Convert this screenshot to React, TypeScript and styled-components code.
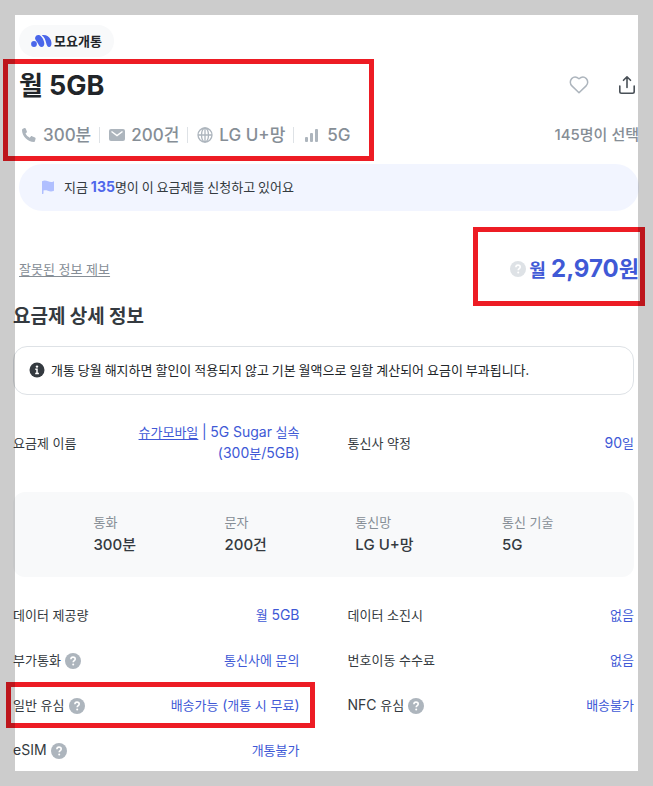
import React from "react";
import styled, { createGlobalStyle, css } from "styled-components";

const hangulFirst = `"Noto Sans CJK KR", Inter, sans-serif`;
const latinFirst = `Inter, "Noto Sans CJK KR", sans-serif`;

const GlobalStyle = createGlobalStyle`
  *, *::before, *::after { box-sizing: border-box; }
  body {
    margin: 0;
    background: #fff;
    color: #343a40;
    font-family: ${latinFirst};
    font-size: 13px;
    line-height: 21px;
  }
  h1, h2, p, dl, dd, dt, ul { margin: 0; padding: 0; }
  button { font: inherit; border: 0; background: none; padding: 0; cursor: pointer; }
`;

const Page = styled.main`
  position: relative;
  min-height: 100vh;
  padding: 25px 0;
  overflow: hidden;
`;

const Frame = styled.div`
  position: absolute;
  inset: 0;
  z-index: 2;
  border: 15px solid rgba(0, 0, 0, 0.2);
  pointer-events: none;
`;

const Highlight = styled.div<{ $inset: string }>`
  position: absolute;
  inset: ${(p) => p.$inset};
  z-index: 1;
  border: 5px solid #ed1c24;
  pointer-events: none;
`;

const LatinRun = styled.span<{ $size: number }>`
  font-family: ${latinFirst};
  font-size: ${(p) => p.$size}px;
  line-height: 1;
`;

/* Sets the Latin letters and digits of a mixed string a little larger than its Hangul. */
const Mixed = ({ text, latin }: { text: string; latin: number }) => (
  <span>
    {text
      .split(/([\x21-\x7e]+)/)
      .filter(Boolean)
      .map((part, i) =>
        /^[\x21-\x7e]/.test(part) ? (
          <LatinRun key={i} $size={latin}>
            {part}
          </LatinRun>
        ) : (
          part
        ),
      )}
  </span>
);

const Header = styled.header`
  padding: 0 14px 0 19px;
`;

const Badge = styled.div`
  display: inline-flex;
  align-items: center;
  gap: 2px;
  height: 32px;
  padding: 0 12px;
  border-radius: 16px;
  background: #f8f9fa;
  color: #212529;
  font-weight: 600;
  vertical-align: top;
`;

const TitleBlock = styled.div`
  display: flex;
  justify-content: space-between;
  margin-top: 10px;
`;

const Summary = styled.div`
  position: relative;
`;

const Title = styled.h1`
  height: 36px;
  color: #212529;
  font-size: 26px;
  font-weight: 700;
  line-height: 38px;
`;

const Specs = styled.ul`
  display: flex;
  align-items: center;
  height: 24px;
  margin-top: 20px;
  color: #868e96;
  font-size: 17px;
  font-weight: 500;
  line-height: 24px;
  list-style: none;
`;

const Spec = styled.li`
  display: flex;
  align-items: center;
  gap: 6px;
  white-space: nowrap;

  & + &::before {
    content: "";
    width: 1px;
    height: 16px;
    margin: 0 3px 0 8px;
    background: #dee2e6;
  }
`;

const Side = styled.div`
  display: flex;
  flex-direction: column;
  align-items: flex-end;
  white-space: nowrap;
`;

const Actions = styled.div`
  display: flex;
  align-items: center;
  gap: 24px;
  height: 36px;
`;

const IconButton = styled.button`
  display: flex;
  width: 24px;
  height: 24px;
`;

const Picks = styled.p`
  height: 24px;
  margin-top: 20px;
  color: #868e96;
  font-size: 15px;
  font-weight: 500;
  line-height: 24px;
`;

const Banner = styled.p`
  display: flex;
  align-items: center;
  gap: 8px;
  height: 47px;
  margin-top: 17px;
  padding: 0 21px 2px;
  border-radius: 24px;
  background: #f2f5ff;
  font-family: ${hangulFirst};

  strong {
    color: #4f67eb;
    font-family: ${latinFirst};
    font-size: 14px;
    font-weight: 700;
    line-height: 1;
  }
`;

const PriceRow = styled.div`
  display: flex;
  align-items: center;
  justify-content: space-between;
  height: 32px;
  margin-top: 42px;
`;

const ReportLink = styled.a`
  color: #868e96;
  text-underline-offset: 2px;
`;

const Price = styled.p`
  position: relative;
  display: flex;
  align-items: center;
  gap: 3px;
  height: 32px;
  color: #4059d6;
  font-size: 22px;
  font-weight: 700;
  line-height: 32px;
  white-space: nowrap;

  small {
    font-size: 18px;
    line-height: 1;
  }
`;

const Details = styled.section`
  padding: 0 19px 0 13px;
`;

const Heading = styled.h2`
  margin-top: 16px;
  font-family: ${hangulFirst};
  font-size: 19px;
  font-weight: 600;
  line-height: 28px;
`;

const Notice = styled.p`
  display: flex;
  align-items: center;
  gap: 6px;
  margin-top: 17px;
  padding: 12px 15px 14px;
  border: 1px solid #dee2e6;
  border-radius: 14px;
  color: #212529;
  font-family: ${hangulFirst};
`;

const Rows = styled.dl<{ $top: number }>`
  display: grid;
  grid-template-columns: 1fr 1fr;
  gap: 24px 48px;
  margin-top: ${(p) => p.$top}px;
`;

const Row = styled.div`
  position: relative;
  display: flex;
  align-items: center;
  justify-content: space-between;
  gap: 16px;
  min-height: 21px;

  dt {
    display: flex;
    align-items: center;
    gap: 4px;
    white-space: nowrap;
  }
  dd {
    color: #4059d6;
    text-align: right;
  }
  a { color: inherit; text-underline-offset: 2px; }
`;

const Stats = styled.dl`
  display: flex;
  justify-content: space-evenly;
  gap: 8px;
  margin-top: 28px;
  padding: 20px 0;
  border-radius: 12px;
  background: #f8f9fa;

  dt { color: #868e96; line-height: 20px; }
  dd { height: 25px; font-size: 15px; font-weight: 500; line-height: 25px; }
`;

const HelpButton = styled.button<{ $light?: boolean }>`
  display: flex;
  color: ${(p) => (p.$light ? "#dee2e6" : "#adb5bd")};
`;

const Svg = styled.svg<{ $tone?: string }>`
  flex: none;
  display: block;
  ${(p) => p.$tone && css`color: ${p.$tone};`}
`;

const MoyoLogo = () => (
  <Svg width="21" height="14" viewBox="0 0 21 14" $tone="#4a66ea" fill="currentColor" aria-hidden="true">
    <circle cx="3" cy="10" r="2.900" />
    <path d="M4 4.300C4.300 1.900 6 .7 7.800 1c2.600.5 5.300 5 5.500 8.300.1 2.300-1 3.700-2.700 3.700-1.800 0-2.600-1.400-3.500-3.300C6.100 7.500 4.400 6.800 4 4.300Z" />
    <path d="M10.800 1.200c4-.6 7.400.9 8.900 4.600 1.300 3.200 1 7-1.400 7.200-1.800.2-2.600-1.500-3.200-4.200-.6-2.900-1.800-5.900-4.300-7.600Z" />
  </Svg>
);

const Help = ({ label, light }: { label: string; light?: boolean }) => (
  <HelpButton type="button" aria-label={label} $light={light}>
    <Svg width="16" height="16" viewBox="0 0 16 16" aria-hidden="true">
      <circle cx="8" cy="8" r="8" fill="currentColor" />
      <path d="M5.900 6.200c0-1.300.9-2.100 2.100-2.100s2.200.8 2.200 1.900c0 1.600-2 1.500-2 3.200" fill="none" stroke="#fff" strokeWidth="1.600" />
      <circle cx="8.200" cy="11.500" r="1" fill="#fff" />
    </Svg>
  </HelpButton>
);

const Phone = () => (
  <Svg width="18" height="18" viewBox="0 0 18 18" $tone="#adb5bd" fill="currentColor" aria-hidden="true">
    <path d="M3.900 2.700 5.500 2c.5-.2 1 .1 1.200.5l1.200 2.900c.2.5 0 .9-.3 1.200L6.500 7.500c.9 1.800 2.300 3.200 4.200 4.200l1.100-1.200c.3-.3.800-.5 1.200-.3l3 1.300c.5.2.7.700.6 1.200l-.6 2.300c-.1.500-.5.900-1 .9C8.700 15.900 3 10.200 3 3.900c0-.5.400-1 .9-1.200Z" />
  </Svg>
);

const Mail = () => (
  <Svg width="16" height="18" viewBox="0 0 16 18" aria-hidden="true">
    <rect y="3" width="16" height="12" rx="2" fill="#adb5bd" />
    <path d="m2.500 5.500 5.500 4 5.500-4" fill="none" stroke="#fff" strokeWidth="1.500" />
  </Svg>
);

const GlobeIcon = () => (
  <Svg width="16" height="18" viewBox="0 0 16 18" $tone="#adb5bd" fill="none" stroke="currentColor" strokeWidth="1.300" aria-hidden="true">
    <circle cx="8" cy="9" r="7" />
    <ellipse cx="8" cy="9" rx="3.500" ry="7" />
    <path d="M1 9h14M8 2v14" />
  </Svg>
);

const Bars = () => (
  <Svg width="18" height="18" viewBox="0 0 18 18" $tone="#adb5bd" fill="currentColor" aria-hidden="true">
    <rect x="2" y="11" width="3" height="5" rx="1" />
    <rect x="7" y="7" width="3" height="9" rx="1" />
    <rect x="12" y="3" width="3" height="13" rx="1" />
  </Svg>
);

const Heart = () => (
  <Svg width="24" height="24" viewBox="0 0 24 24" fill="none" stroke="#adb5bd" strokeWidth="1.500" strokeLinejoin="round" aria-hidden="true">
    <path d="M12 19.800 4.900 12.900C2.900 10.900 2.700 7.600 4.700 5.600c2-1.900 5-1.800 7.300.2 2.300-2 5.300-2.100 7.300-.2 2 2 1.800 5.300-.2 7.300Z" />
  </Svg>
);

const Share = () => (
  <Svg width="24" height="24" viewBox="0 0 24 24" fill="none" stroke="#495057" strokeWidth="1.600" strokeLinecap="round" strokeLinejoin="round" aria-hidden="true">
    <path d="M12 14.500V4M8.500 7.300 12 3.800l3.500 3.500M4.800 13v5.500c0 1 .7 1.700 1.700 1.700h11c1 0 1.700-.7 1.700-1.700V13" />
  </Svg>
);

const Flag = () => (
  <Svg width="16" height="16" viewBox="0 0 16 16" $tone="#b0bfff" fill="currentColor" aria-hidden="true">
    <path d="M2 2.200c2-1.200 4-.8 6 0s4 1 5.300.2c.4-.2.700 0 .7.400v8.400c0 .4-.2.600-.5.700-2 .8-3.800.5-5.700-.2-1.600-.6-3-.6-4.300-.1v2.700c0 .5-.3.700-.7.700H2Z" />
  </Svg>
);

const Info = () => (
  <Svg width="16" height="16" viewBox="0 0 16 16" aria-hidden="true">
    <circle cx="8" cy="8" r="7.500" fill="#343a40" />
    <circle cx="8" cy="4.600" r="1.200" fill="#fff" />
    <path d="M6.300 7.300H8v4M6.200 11.600h3.700" fill="none" stroke="#fff" strokeWidth="1.500" />
  </Svg>
);

const specs = [
  { icon: <Phone />, text: "300분" },
  { icon: <Mail />, text: "200건" },
  { icon: <GlobeIcon />, text: "LG U+망" },
  { icon: <Bars />, text: "5G" },
];

const stats = [
  ["통화", "300분"],
  ["문자", "200건"],
  ["통신망", "LG U+망"],
  ["통신 기술", "5G"],
];

const rows = [
  { label: "데이터 제공량", value: "월 5GB" },
  { label: "데이터 소진시", value: "없음" },
  { label: "부가통화", value: "통신사에 문의", help: true },
  { label: "번호이동 수수료", value: "없음" },
  { label: "일반 유심", value: "배송가능 (개통 시 무료)", help: true, marked: true },
  { label: "NFC 유심", value: "배송불가", help: true },
  { label: "eSIM", value: "개통불가", help: true },
];

export default function App() {
  return (
    <Page>
      <GlobalStyle />
      <Header>
        <Badge>
          <MoyoLogo />
          모요개통
        </Badge>
        <TitleBlock>
          <Summary>
            <Title>
              <Mixed text="월 5GB" latin={27} />
            </Title>
            <Specs>
              {specs.map((s) => (
                <Spec key={s.text}>
                  {s.icon}
                  {s.text}
                </Spec>
              ))}
            </Specs>
            <Highlight $inset="-8px -23px -14px -16px" />
          </Summary>
          <Side>
            <Actions>
              <IconButton type="button" aria-label="찜하기">
                <Heart />
              </IconButton>
              <IconButton type="button" aria-label="공유하기">
                <Share />
              </IconButton>
            </Actions>
            <Picks>145명이 선택</Picks>
          </Side>
        </TitleBlock>
        <Banner>
          <Flag />
          <span>
            지금 <strong>135</strong>명이 이 요금제를 신청하고 있어요
          </span>
        </Banner>
        <PriceRow>
          <ReportLink href="#report">잘못된 정보 제보</ReportLink>
          <Price>
            <Help label="요금 안내" light />
            <span>
              <small>월</small> <Mixed text="2,970원" latin={24} />
            </span>
            <Highlight $inset="-26px -6px -21px -37px" />
          </Price>
        </PriceRow>
      </Header>

      <Details>
        <Heading>요금제 상세 정보</Heading>
        <Notice>
          <Info />
          개통 당월 해지하면 할인이 적용되지 않고 기본 월액으로 일할 계산되어 요금이 부과됩니다.
        </Notice>
        <Rows $top={27}>
          <Row>
            <dt>요금제 이름</dt>
            <dd>
              <a href="#carrier">슈가모바일</a>
              <Mixed text=" | 5G Sugar 실속" latin={14} />
              <br />
              <Mixed text="(300분/5GB)" latin={14} />
            </dd>
          </Row>
          <Row>
            <dt>통신사 약정</dt>
            <dd>
              <Mixed text="90일" latin={14} />
            </dd>
          </Row>
        </Rows>
        <Stats>
          {stats.map(([label, value]) => (
            <div key={label}>
              <dt>{label}</dt>
              <dd>{value}</dd>
            </div>
          ))}
        </Stats>
        <Rows $top={28}>
          {rows.map((r) => (
            <Row key={r.label}>
              <dt>
                <Mixed text={r.label} latin={14} />
                {r.help && <Help label={`${r.label} 안내`} />}
              </dt>
              <dd>
                <Mixed text={r.value} latin={14} />
              </dd>
              {r.marked && <Highlight $inset="-13px -15px -12px -7px" />}
            </Row>
          ))}
        </Rows>
      </Details>
      <Frame />
    </Page>
  );
}
